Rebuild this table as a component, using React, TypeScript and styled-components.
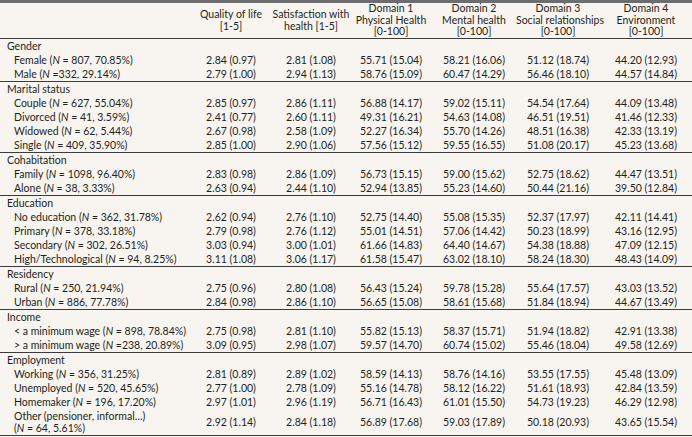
import { Fragment } from 'react'
import styled, { createGlobalStyle } from 'styled-components'

const GlobalStyle = createGlobalStyle`
  html, body {
    margin: 0;
    padding: 0;
    background: #f8f4f0;
  }
  body {
    font-family: Lato, 'Liberation Sans', sans-serif;
    color: #231f20;
  }
`

const Table = styled.table`
  width: 692px;
  border-collapse: separate;
  border-spacing: 0;
  table-layout: fixed;
  border-top: 3px solid #6d6d6d;
  border-bottom: 1px solid #3c3c3c;
  font-size: 10.5px;
`

const HeadCell = styled.th`
  font-weight: normal;
  text-align: center;
  vertical-align: middle;
  line-height: 11.5px;
  padding: 0;
  height: 35px;
  box-sizing: border-box;
  white-space: nowrap;
`

const SectionCell = styled.td`
  border-top: 1px solid #3c3c3c;
  padding: 0 0 0 7px;
  line-height: 14px;
  white-space: nowrap;
`

const LabelCell = styled.td<{ $wrap?: boolean }>`
  padding: ${(p) => (p.$wrap ? '2px 0 1px 14px' : '0 0 0 14px')};
  line-height: ${(p) => (p.$wrap ? '11.5px' : '14px')};
  white-space: nowrap;
`

const ValueCell = styled.td`
  text-align: center;
  vertical-align: middle;
  white-space: nowrap;
  line-height: 14px;
  padding: 0;
`

type Row = { name: string; n: string; wrap?: boolean; values: string[] }
type Section = { title: string; rows: Row[] }

const sections: Section[] = [
  {
    title: 'Gender',
    rows: [
      { name: 'Female', n: ' = 807, 70.85%', values: ['2.84 (0.97)', '2.81 (1.08)', '55.71 (15.04)', '58.21 (16.06)', '51.12 (18.74)', '44.20 (12.93)'] },
      { name: 'Male', n: ' =332, 29.14%', values: ['2.79 (1.00)', '2.94 (1.13)', '58.76 (15.09)', '60.47 (14.29)', '56.46 (18.10)', '44.57 (14.84)'] },
    ],
  },
  {
    title: 'Marital status',
    rows: [
      { name: 'Couple', n: ' = 627, 55.04%', values: ['2.85 (0.97)', '2.86 (1.11)', '56.88 (14.17)', '59.02 (15.11)', '54.54 (17.64)', '44.09 (13.48)'] },
      { name: 'Divorced', n: ' = 41, 3.59%', values: ['2.41 (0.77)', '2.60 (1.11)', '49.31 (16.21)', '54.63 (14.08)', '46.51 (19.51)', '41.46 (12.33)'] },
      { name: 'Widowed', n: ' = 62, 5.44%', values: ['2.67 (0.98)', '2.58 (1.09)', '52.27 (16.34)', '55.70 (14.26)', '48.51 (16.38)', '42.33 (13.19)'] },
      { name: 'Single', n: ' = 409, 35.90%', values: ['2.85 (1.00)', '2.90 (1.06)', '57.56 (15.12)', '59.55 (16.55)', '51.08 (20.17)', '45.23 (13.68)'] },
    ],
  },
  {
    title: 'Cohabitation',
    rows: [
      { name: 'Family', n: ' = 1098, 96.40%', values: ['2.83 (0.98)', '2.86 (1.09)', '56.73 (15.15)', '59.00 (15.62)', '52.75 (18.62)', '44.47 (13.51)'] },
      { name: 'Alone', n: ' = 38, 3.33%', values: ['2.63 (0.94)', '2.44 (1.10)', '52.94 (13.85)', '55.23 (14.60)', '50.44 (21.16)', '39.50 (12.84)'] },
    ],
  },
  {
    title: 'Education',
    rows: [
      { name: 'No education', n: ' = 362, 31.78%', values: ['2.62 (0.94)', '2.76 (1.10)', '52.75 (14.40)', '55.08 (15.35)', '52.37 (17.97)', '42.11 (14.41)'] },
      { name: 'Primary', n: ' = 378, 33.18%', values: ['2.79 (0.98)', '2.76 (1.12)', '55.01 (14.51)', '57.06 (14.42)', '50.23 (18.99)', '43.16 (12.95)'] },
      { name: 'Secondary', n: ' = 302, 26.51%', values: ['3.03 (0.94)', '3.00 (1.01)', '61.66 (14.83)', '64.40 (14.67)', '54.38 (18.88)', '47.09 (12.15)'] },
      { name: 'High/Technological', n: ' = 94, 8.25%', values: ['3.11 (1.08)', '3.06 (1.17)', '61.58 (15.47)', '63.02 (18.10)', '58.24 (18.30)', '48.43 (14.09)'] },
    ],
  },
  {
    title: 'Residency',
    rows: [
      { name: 'Rural', n: ' = 250, 21.94%', values: ['2.75 (0.96)', '2.80 (1.08)', '56.43 (15.24)', '59.78 (15.28)', '55.64 (17.57)', '43.03 (13.52)'] },
      { name: 'Urban', n: ' = 886, 77.78%', values: ['2.84 (0.98)', '2.86 (1.10)', '56.65 (15.08)', '58.61 (15.68)', '51.84 (18.94)', '44.67 (13.49)'] },
    ],
  },
  {
    title: 'Income',
    rows: [
      { name: '< a minimum wage', n: ' = 898, 78.84%', values: ['2.75 (0.98)', '2.81 (1.10)', '55.82 (15.13)', '58.37 (15.71)', '51.94 (18.82)', '42.91 (13.38)'] },
      { name: '> a minimum wage', n: ' =238, 20.89%', values: ['3.09 (0.95)', '2.98 (1.07)', '59.57 (14.70)', '60.74 (15.02)', '55.46 (18.04)', '49.58 (12.69)'] },
    ],
  },
  {
    title: 'Employment',
    rows: [
      { name: 'Working', n: ' = 356, 31.25%', values: ['2.81 (0.89)', '2.89 (1.02)', '58.59 (14.13)', '58.76 (14.16)', '53.55 (17.55)', '45.48 (13.09)'] },
      { name: 'Unemployed', n: ' = 520, 45.65%', values: ['2.77 (1.00)', '2.78 (1.09)', '55.16 (14.78)', '58.12 (16.22)', '51.61 (18.93)', '42.84 (13.59)'] },
      { name: 'Homemaker', n: ' = 196, 17.20%', values: ['2.97 (1.01)', '2.96 (1.19)', '56.71 (16.43)', '61.01 (15.50)', '54.73 (19.23)', '46.29 (12.98)'] },
      { name: 'Other (pensioner, informal…)', n: ' = 64, 5.61%', wrap: true, values: ['2.92 (1.14)', '2.84 (1.18)', '56.89 (17.68)', '59.03 (17.89)', '50.18 (20.93)', '43.65 (15.54)'] },
    ],
  },
]

const colWidths = [190, 82, 78, 82, 84, 84, 92]

const App = () => {
  return (
    <>
      <GlobalStyle />
      <Table>
        <colgroup>
          {colWidths.map((w, i) => (
            <col key={i} style={{ width: w }} />
          ))}
        </colgroup>
        <thead>
          <tr>
            <HeadCell />
            <HeadCell>Quality of life<br />[1-5]</HeadCell>
            <HeadCell>Satisfaction with<br />health [1-5]</HeadCell>
            <HeadCell>Domain 1<br />Physical Health<br />[0-100]</HeadCell>
            <HeadCell>Domain 2<br />Mental health<br />[0-100]</HeadCell>
            <HeadCell>Domain 3<br />Social relationships<br />[0-100]</HeadCell>
            <HeadCell>Domain 4<br />Environment<br />[0-100]</HeadCell>
          </tr>
        </thead>
        <tbody>
          {sections.map((s) => (
            <Fragment key={s.title}>
              <tr>
                <SectionCell colSpan={7}>{s.title}</SectionCell>
              </tr>
              {s.rows.map((r) => (
                <tr key={r.name}>
                  {r.wrap ? (
                    <LabelCell $wrap>
                      {r.name}
                      <br />(<i>N</i>{r.n})
                    </LabelCell>
                  ) : (
                    <LabelCell>
                      {r.name} (<i>N</i>{r.n})
                    </LabelCell>
                  )}
                  {r.values.map((v, i) => (
                    <ValueCell key={i}>{v}</ValueCell>
                  ))}
                </tr>
              ))}
            </Fragment>
          ))}
        </tbody>
      </Table>
    </>
  )
}

export default App
